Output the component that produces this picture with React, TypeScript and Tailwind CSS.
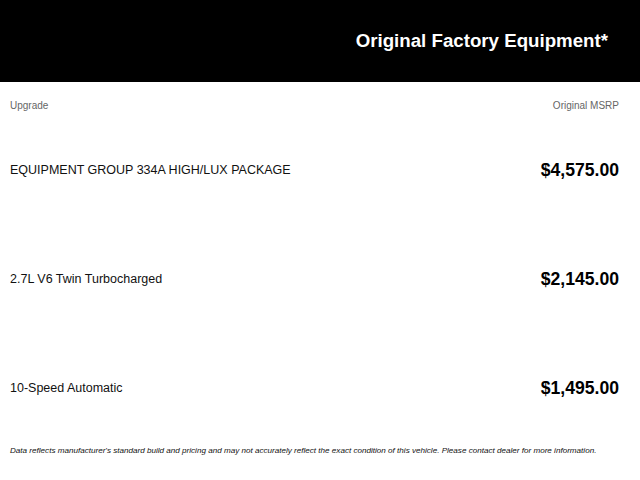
import React from "react";

const rows = [
  { name: "EQUIPMENT GROUP 334A HIGH/LUX PACKAGE", price: "$4,575.00" },
  { name: "2.7L V6 Twin Turbocharged", price: "$2,145.00" },
  { name: "10-Speed Automatic", price: "$1,495.00" },
];

export default function App() {
  return (
    <div
      className="w-[640px] h-[480px] bg-white overflow-hidden"
      style={{ fontFamily: '"Liberation Sans", Arial, sans-serif' }}
    >
      <div className="h-[82px] bg-black flex items-center justify-end pr-[32px]">
        <h1 className="text-white font-bold text-[18.7px] leading-none">
          Original Factory Equipment*
        </h1>
      </div>
      <div className="pl-[10px] pr-[21px]">
        <div className="flex justify-between items-center pt-[17px] h-[30px] text-[10px] leading-[14px] text-[#666]">
          <span>Upgrade</span>
          <span>Original MSRP</span>
        </div>
        <div className="mt-[4px]">
          {rows.map((r) => (
            <div key={r.name} className="h-[109px] flex items-center justify-between">
              <span className="text-[12.5px] text-[#111]">{r.name}</span>
              <span className="text-[17.6px] font-bold text-black">{r.price}</span>
            </div>
          ))}
        </div>
        <p className="italic text-[8.1px] leading-[12px] text-[#111] mt-[2px]">
          Data reflects manufacturer's standard build and pricing and may not accurately reflect the exact condition of this vehicle. Please contact dealer for more information.
        </p>
      </div>
    </div>
  );
}
